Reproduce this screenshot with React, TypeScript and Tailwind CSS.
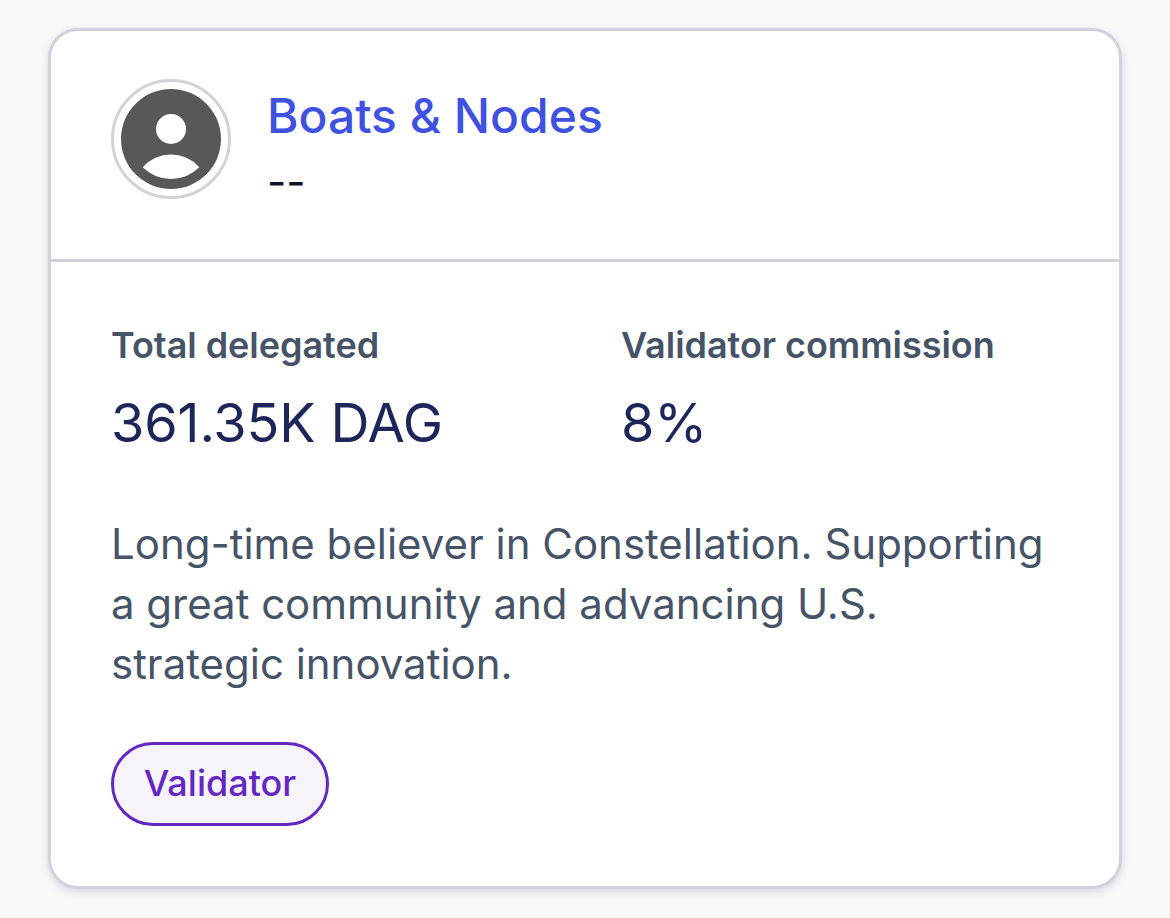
export default function App() {
  return (
    <div className="h-[918px] w-[1170px] bg-[#f7f9f9] px-12 pt-7 font-['Inter',sans-serif]">
      <article className="flex h-[861px] w-[1074px] flex-col rounded-[30px] border-3 border-[#d1d2db] bg-white shadow-[0_3px_9px_rgba(16,24,60,0.14)]">
        <header className="flex h-[231px] items-start gap-[36px] border-b-3 border-[#d1d2d9] pt-12 pl-[60px]">
          <svg className="size-[120px]" viewBox="0 0 120 120">
            <circle cx="60" cy="60" r="58.5" fill="#fff" stroke="#d1d3d9" strokeWidth="3" />
            <circle cx="60" cy="60" r="50" fill="#585858" />
            <circle cx="60" cy="50" r="15" fill="#fff" />
            <path d="M31.700 88.200A38 38 0 0 1 88.300 88.200A40 40 0 0 1 31.700 88.200Z" fill="#fff" />
          </svg>
          <div className="pt-[7px]">
            <h1 className="text-[48px] leading-[60px] font-medium tracking-[-0.02px] text-[#3f51e1]">Boats &amp; Nodes</h1>
            <p className="mt-1 text-[42px] leading-[63px] text-[#14142b]">--</p>
          </div>
        </header>
        <div className="flex flex-col items-start px-[60px] pt-[56px]">
          <dl className="grid w-full grid-cols-[510px_1fr]">
            <div>
              <dt className="text-[36px] leading-[54px] font-semibold tracking-[-0.04px] text-[#475467]">Total delegated</dt>
              <dd className="mt-3 text-[54px] leading-[78px] tracking-[-0.14px] text-[#1d2559]">361.35K DAG</dd>
            </div>
            <div>
              <dt className="text-[36px] leading-[54px] font-semibold tracking-[-0.04px] text-[#475467]">Validator commission</dt>
              <dd className="mt-3 text-[54px] leading-[78px] tracking-[-0.14px] text-[#1d2559]">8%</dd>
            </div>
          </dl>
          <p className="mt-[52px] text-[42px] leading-[60px] tracking-[-0.02px] whitespace-nowrap text-[#475467]">
            Long-time believer in Constellation. Supporting<br />
            a great community and advancing U.S.<br />
            strategic innovation.
          </p>
          <span className="mt-12 flex h-[84px] w-[218px] items-center justify-center rounded-full border-3 border-[#6228c0] bg-[#f7f3fb] pb-0.5 text-[36px] leading-[54px] font-medium text-[#6228c0]">Validator</span>
        </div>
      </article>
    </div>
  );
}
